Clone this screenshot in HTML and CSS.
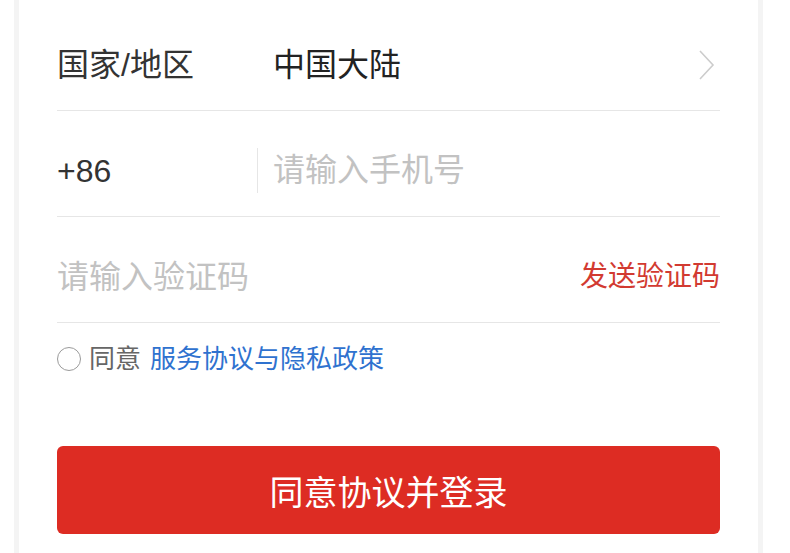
FILE: index.html
```html
<!DOCTYPE html>
<html lang="zh-CN">

<head>
    <meta charset="UTF-8">
    <meta name="viewport" content="width=device-width, initial-scale=1.0">
    <title>登录</title>
    <link rel="stylesheet" href="styles.css">
</head>

<body>
    <div class="page">
        <form class="card" onsubmit="return false">
            <div class="row">
                <span class="label">国家/地区</span>
                <span class="value">中国大陆</span>
                <svg class="chevron" width="17" height="30" viewBox="0 0 17 30">
                    <polyline points="2,1 15,15 2,29" fill="none" stroke="#cccccc" stroke-width="1.6" />
                </svg>
            </div>
            <div class="row">
                <span class="label">+86</span>
                <input class="field phone" type="tel" placeholder="请输入手机号">
            </div>
            <div class="row">
                <input class="field" type="text" placeholder="请输入验证码">
                <button class="send" type="button">发送验证码</button>
            </div>
            <label class="agree">
                <span class="radio"></span>
                <span class="agree-text">同意</span>
                <a class="agree-link" href="#">服务协议与隐私政策</a>
            </label>
            <button class="submit" type="submit">同意协议并登录</button>
        </form>
    </div>
</body>

</html>
```

FILE: styles.css
```css
body {
    font-family: "Liberation Sans", "Noto Sans CJK SC", sans-serif;
    margin: 0;
    background-color: #ffffff;
    color: #333333;
}

.page {
    padding: 0 27px 0 14px;
}

.card {
    display: flex;
    flex-direction: column;
    min-height: 553px;
    box-sizing: border-box;
    padding: 5px 38px 0 38px;
    border-left: 5px solid #f4f4f4;
    border-right: 5px solid #f4f4f4;
}

.row {
    display: flex;
    align-items: center;
    height: 91px;
    margin-top: 14px;
    border-bottom: 1px solid #e6e6e6;
    font-size: 32px;
    line-height: 40px;
}

.label {
    width: 200px;
    flex: 0 0 200px;
    color: #333333;
}

.value {
    flex: 1;
    margin-left: 16px;
    color: #222222;
}

.chevron {
    margin-right: 5px;
}

.field {
    flex: 1;
    min-width: 0;
    border: none;
    outline: none;
    padding: 0;
    font-family: inherit;
    font-size: 32px;
    line-height: 40px;
    color: #333333;
    background: transparent;
}

.field::placeholder {
    color: #c2c2c2;
}

.phone {
    height: 45px;
    border-left: 1px solid #e6e6e6;
    padding-left: 15px;
}

.send {
    border: none;
    background: none;
    padding: 0;
    font-family: inherit;
    font-size: 28px;
    line-height: 36px;
    color: #d23a31;
}

.agree {
    display: flex;
    align-items: center;
    margin-top: 23px;
    font-size: 26px;
    line-height: 26px;
}

.radio {
    width: 22px;
    height: 22px;
    border: 1.5px solid #9a9a9a;
    border-radius: 50%;
}

.agree-text {
    margin-left: 8px;
    color: #666666;
}

.agree-link {
    margin-left: 9px;
    color: #2f72cf;
    text-decoration: none;
}

.submit {
    margin-top: 74px;
    height: 88px;
    border: none;
    border-radius: 6px;
    background-color: #dd2c23;
    color: #ffffff;
    font-family: inherit;
    font-size: 34px;
}
```
